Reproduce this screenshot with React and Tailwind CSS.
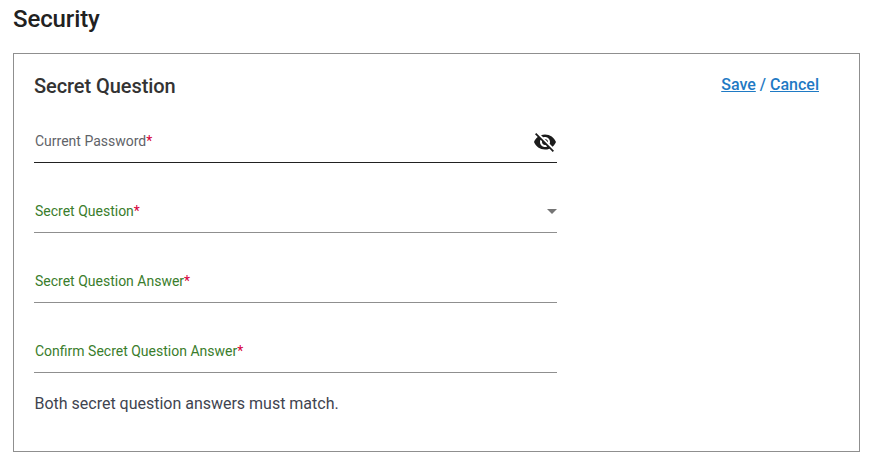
import React from "react";

const Field = ({ label, labelClass, lineClass, children }) => (
  <div className="relative flex h-[70px] w-[523px] items-end">
    <div className={`flex h-[41px] w-full items-start justify-between border-b pt-[9px] ${lineClass}`}>
      <label className={`pl-[1px] text-[14px] leading-[20px] ${labelClass}`}>
        {label}
        <span className="text-[#d6003a]">*</span>
      </label>
      {children}
    </div>
  </div>
);

const App = () => {
  return (
    <div className="h-[465px] w-[885px] overflow-hidden bg-white px-[13px] font-['Roboto',sans-serif]">
      <h1 className="h-[53px] pt-[4px] text-[24px] font-medium leading-[30px] tracking-[-0.12px] text-[#212121]">Security</h1>

      <section className="h-[399px] w-[847px] border border-[#8f8f8f] px-[20px] pt-[18px]">
        <div className="flex items-start justify-between pr-[20px]">
          <h2 className="text-[20px] font-medium leading-[28px] tracking-[-0.07px] text-[#333333]">Secret Question</h2>
          <div className="pt-[1px] text-[16px] font-medium leading-[24px] text-[#1f7ac4]">
            <a className="underline">Save</a> / <a className="underline">Cancel</a>
          </div>
        </div>

        <div className="-mt-[7px]">
          <Field label="Current Password" labelClass="text-[#5f6368]" lineClass="border-[#212121]">
            <svg viewBox="0 0 24 24" className="-mt-[1px] h-6 w-6 fill-[#1c1c1c]">
              <path d="M12 7c2.76 0 5 2.24 5 5 0 .65-.13 1.26-.36 1.83l2.92 2.92c1.51-1.26 2.7-2.89 3.43-4.75-1.73-4.39-6-7.5-11-7.5-1.4 0-2.74.25-3.98.7l2.16 2.16C10.74 7.13 11.35 7 12 7zM2 4.27l2.28 2.28.46.46C3.08 8.3 1.78 10.02 1 12c1.73 4.39 6 7.5 11 7.5 1.55 0 3.03-.3 4.38-.84l.42.42L19.73 22 21 20.73 3.27 3 2 4.27zM7.53 9.8l1.55 1.55c-.05.21-.08.43-.08.65 0 1.66 1.34 3 3 3 .22 0 .44-.03.65-.08l1.55 1.55c-.67.33-1.41.53-2.2.53-2.76 0-5-2.24-5-5 0-.79.2-1.53.53-2.2zm4.31-.78l3.15 3.15.02-.16c0-1.66-1.34-3-3-3l-.17.01z" />
            </svg>
          </Field>
          <Field label="Secret Question" labelClass="text-[#3a7d2c]" lineClass="border-[#8f8f8f]">
            <span className="mt-[8px] h-0 w-0 border-x-[5px] border-t-[5px] border-x-transparent border-t-[#757575]" />
          </Field>
          <Field label="Secret Question Answer" labelClass="text-[#3a7d2c]" lineClass="border-[#8f8f8f]" />
          <Field label="Confirm Secret Question Answer" labelClass="text-[#3a7d2c]" lineClass="border-[#8f8f8f]" />
        </div>

        <p className="pl-[0.5px] pt-[19px] text-[16px] leading-[24px] tracking-[-0.01px] text-[#3f4450]">Both secret question answers must match.</p>
      </section>
    </div>
  );
};

export default App;
